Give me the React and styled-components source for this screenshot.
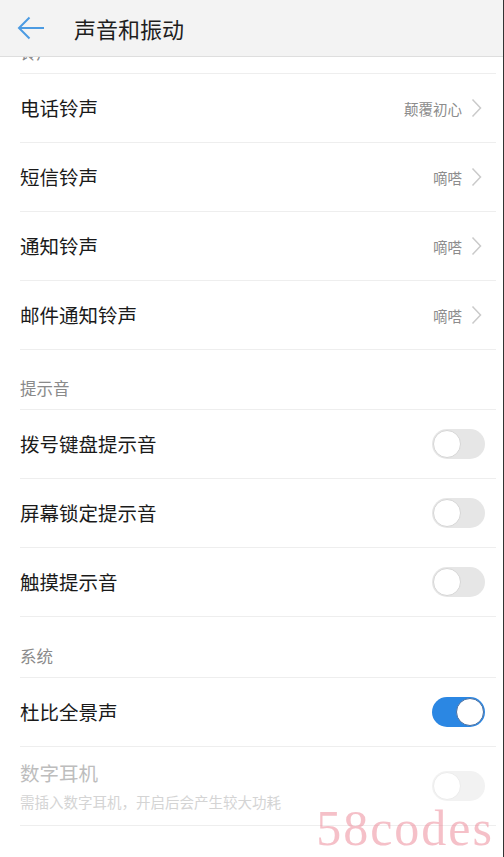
import React from "react";
import styled, { createGlobalStyle } from "styled-components";

const GlobalStyles = createGlobalStyle`
  html, body {
    margin: 0;
    padding: 0;
    background: #fff;
    font-family: "Noto Sans CJK SC", "Noto Sans", sans-serif;
  }
`;

const Screen = styled.div`
  position: relative;
  width: 504px;
  height: 857px;
  overflow: hidden;
  background: #fff;
  box-sizing: border-box;
  border-right: 1px solid #333;
`;

const Header = styled.header`
  position: relative;
  z-index: 2;
  display: flex;
  align-items: center;
  height: 57px;
  background: #f3f3f3;
  border-bottom: 1px solid #dedede;
  box-sizing: border-box;
`;

const BackButton = styled.div`
  display: flex;
  align-items: center;
  justify-content: center;
  width: 28px;
  margin-left: 17px;
  margin-right: 29px;
`;

const Title = styled.h1`
  margin: 0;
  font-size: 22px;
  font-weight: 400;
  color: #1e1e1e;
  line-height: 1;
`;

const List = styled.div`
  margin-top: -43px;
`;

const SectionHeader = styled.div`
  display: flex;
  align-items: flex-end;
  height: ${(p) => (p.$gap ? "61px" : "60px")};
  margin: 0 7px 0 20px;
  padding-bottom: 13px;
  box-sizing: border-box;
  border-bottom: 1px solid #eeeeee;
  font-size: 16.5px;
  line-height: 1;
  color: #8a8a8a;
`;

const Row = styled.div`
  display: flex;
  align-items: center;
  justify-content: space-between;
  height: ${(p) => (p.$tall ? "79px" : "69px")};
  margin: 0 7px 0 20px;
  padding-right: ${(p) => (p.$toggle ? "11px" : "14px")};
  box-sizing: border-box;
  border-bottom: 1px solid #eeeeee;
`;

const Labels = styled.div`
  display: flex;
  flex-direction: column;
  gap: 12px;
`;

const Label = styled.div`
  font-size: 19.5px;
  line-height: 1;
  color: ${(p) => (p.$disabled ? "#bdbdbd" : "#1a1a1a")};
`;

const Sub = styled.div`
  font-size: 14.5px;
  line-height: 1;
  color: #d4d4d4;
`;

const Value = styled.div`
  display: flex;
  align-items: center;
  gap: 9px;
  font-size: 14.5px;
  color: #8c8c8c;
`;

const Track = styled.div`
  position: relative;
  width: 53px;
  height: 30px;
  border-radius: 15px;
  box-sizing: border-box;
  background: ${(p) => (p.$on ? "#2b87e3" : p.$disabled ? "#f2f2f2" : "#e6e6e6")};
`;

const Knob = styled.div`
  position: absolute;
  top: 1px;
  left: ${(p) => (p.$on ? "24px" : "1px")};
  width: 28px;
  height: 28px;
  border-radius: 50%;
  box-sizing: border-box;
  background: #fff;
  border: 1px solid ${(p) => (p.$on ? "#4a6fa0" : p.$disabled ? "#ececec" : "#d6d6d6")};
`;

const Watermark = styled.div`
  position: absolute;
  right: 9px;
  bottom: 4px;
  display: flex;
  align-items: flex-end;
  pointer-events: none;
`;

const WaterText = styled.span`
  font-family: "Liberation Serif", serif;
  font-size: 50px;
  letter-spacing: 2px;
  color: rgba(236, 130, 145, 0.5);
  line-height: 1;
`;

const Chevron = () => (
  <svg width="11" height="20" viewBox="0 0 11 20">
    <polyline points="1.5,1.5 9.5,10 1.5,18.5" fill="none" stroke="#cacaca" strokeWidth="1.5" />
  </svg>
);

const BackArrow = () => (
  <svg width="28" height="24" viewBox="0 0 28 24">
    <path d="M27 12H2M12.5 1.5L2 12l10.5 10.5" fill="none" stroke="#4c9be2" strokeWidth="2" />
  </svg>
);

const Toggle = ({ on, disabled }) => (
  <Track $on={on} $disabled={disabled}>
    <Knob $on={on} $disabled={disabled} />
  </Track>
);

const ringtones = [
  { label: "电话铃声", value: "颠覆初心" },
  { label: "短信铃声", value: "嘀嗒" },
  { label: "通知铃声", value: "嘀嗒" },
  { label: "邮件通知铃声", value: "嘀嗒" },
];

const tones = ["拨号键盘提示音", "屏幕锁定提示音", "触摸提示音"];

export default function App() {
  return (
    <>
      <GlobalStyles />
      <Screen>
        <Header>
          <BackButton>
            <BackArrow />
          </BackButton>
          <Title>声音和振动</Title>
        </Header>
        <List>
          <SectionHeader>铃声</SectionHeader>
          {ringtones.map((r) => (
            <Row key={r.label}>
              <Label>{r.label}</Label>
              <Value>
                {r.value}
                <Chevron />
              </Value>
            </Row>
          ))}
          <SectionHeader>提示音</SectionHeader>
          {tones.map((t) => (
            <Row key={t} $toggle>
              <Label>{t}</Label>
              <Toggle />
            </Row>
          ))}
          <SectionHeader $gap>系统</SectionHeader>
          <Row $toggle>
            <Label>杜比全景声</Label>
            <Toggle on />
          </Row>
          <Row $toggle $tall>
            <Labels>
              <Label $disabled>数字耳机</Label>
              <Sub>需插入数字耳机，开启后会产生较大功耗</Sub>
            </Labels>
            <Toggle disabled />
          </Row>
        </List>
        <Watermark>
          <WaterText>58codes</WaterText>
        </Watermark>
      </Screen>
    </>
  );
}
